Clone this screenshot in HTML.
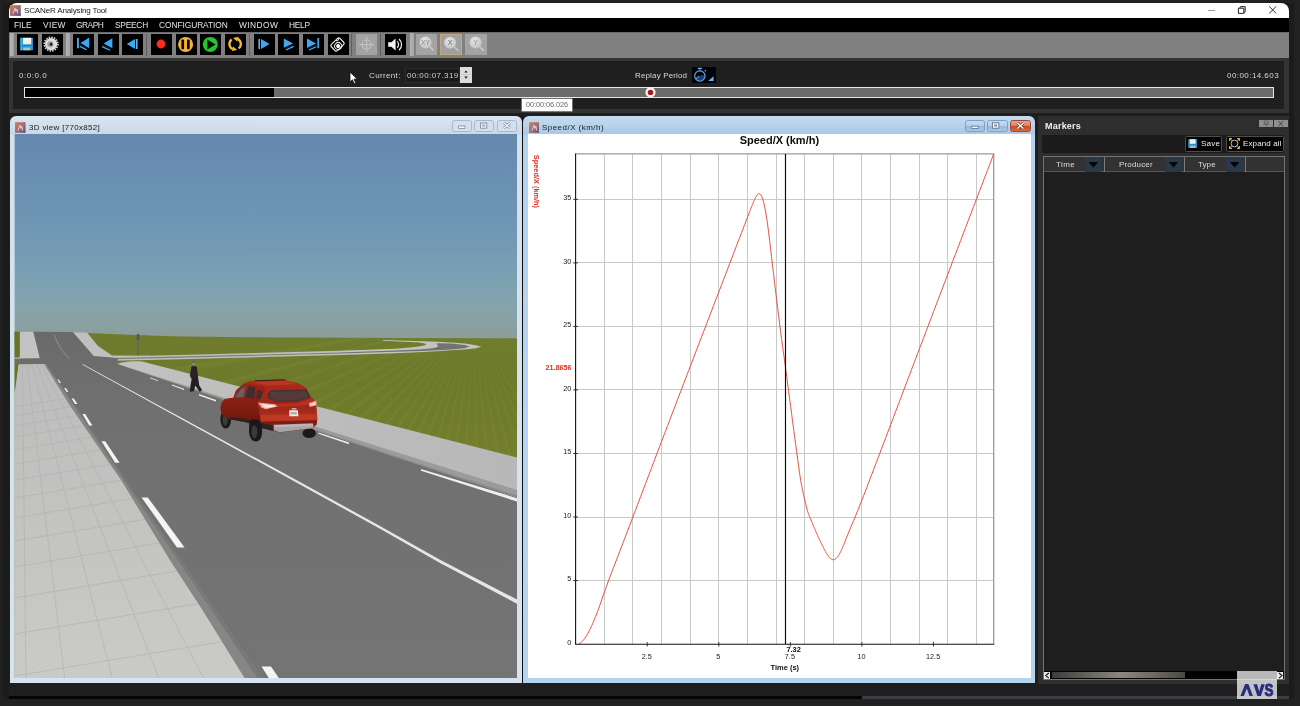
<!DOCTYPE html>
<html>
<head>
<meta charset="utf-8">
<title>SCANeR Analysing Tool</title>
<style>
html,body{margin:0;padding:0;}
body{width:1300px;height:706px;overflow:hidden;background:#212121;position:relative;font-family:"Liberation Sans",sans-serif;}
.a{position:absolute;}
.t{will-change:transform;position:absolute;white-space:nowrap;line-height:12px;font-family:"Liberation Sans",sans-serif;}
.tb{position:absolute;top:34.2px;width:21.2px;height:21px;background:#000;}
.tbd{position:absolute;top:34.2px;width:21.2px;height:21px;background:#a3a3a3;}
.sep{position:absolute;top:33.5px;width:1px;height:22.5px;background:#5e5e5e;}
.hd{position:absolute;top:32.8px;width:4.2px;height:23.5px;background:linear-gradient(90deg,#b4b4b4,#a4a4a4);}
svg{position:absolute;display:block;}
</style>
</head>
<body>
<!-- dark frame around the captured window -->
<div class="a" style="left:3px;top:3px;width:1291px;height:696px;background:#1a1c1b;"></div>
<!-- main window -->
<div class="a" style="left:9px;top:2.8px;width:1280px;height:693.2px;background:#1e1e1e;border-radius:8px 8px 0 0;overflow:hidden;">
  <div class="a" style="left:0;top:0;width:1280px;height:15.4px;background:#fff;"></div>
  <div class="a" style="left:0;top:15.4px;width:1280px;height:13.6px;background:#000;"></div>
  <div class="a" style="left:0;top:28.8px;width:1280px;height:26px;background:#808080;border-top:1px solid #6a6a6a;box-sizing:border-box;"></div>
  <!-- time panel -->
  <div class="a" style="left:0;top:54.8px;width:1280px;height:55.4px;background:#343434;"></div>
  <div class="a" style="left:4px;top:58.2px;width:1271px;height:48px;background:#1f1f1f;"></div>
</div>
<!-- bottom strip -->
<div class="a" style="left:9px;top:695.6px;width:853px;height:3.4px;background:#050505;"></div>
<div class="a" style="left:862px;top:695.6px;width:427px;height:3.4px;background:#3a3e45;"></div>

<!-- app icon -->
<svg style="left:10.3px;top:5px;" width="10.8" height="11" viewBox="0 0 11 11"><defs><linearGradient id="ai" x1="0" y1="0" x2="1" y2="1"><stop offset="0" stop-color="#d9824f"/><stop offset="0.55" stop-color="#9b6a7a"/><stop offset="1" stop-color="#5b4a7e"/></linearGradient></defs><rect width="11" height="11" fill="url(#ai)"/><path d="M3 8.5 L5.2 3.2 L6 6.5 L7.2 4 L8 8.5" stroke="#e8d6d6" stroke-width="0.9" fill="none"/></svg>
<!-- window controls -->
<div class="a" style="left:1208px;top:9.6px;width:7px;height:1.1px;background:#9a9a9a;"></div>
<svg style="left:1236px;top:4px;" width="12" height="12" viewBox="0 0 12 12"><path d="M2.4 4.2 h5.4 v5.2 h-5.4 z M3.8 4.2 L4.6 2.6 h4.6 v5.2 L7.8 8.6" fill="none" stroke="#222" stroke-width="1"/></svg>
<svg style="left:1267px;top:4px;" width="12" height="12" viewBox="0 0 12 12"><path d="M2.2 2.4 L9.2 9.4 M9.2 2.4 L2.2 9.4" stroke="#222" stroke-width="0.95" fill="none"/></svg>

<!-- toolbar -->
<div class="hd" style="left:10px;"></div>
<div class="tb" style="left:16.8px;"></div>
<div class="tb" style="left:41.5px;"></div>
<div class="hd" style="left:66px;"></div>
<div class="tb" style="left:72.7px;"></div>
<div class="tb" style="left:97.5px;"></div>
<div class="tb" style="left:122.2px;"></div>
<div class="sep" style="left:146.4px;"></div>
<div class="tb" style="left:151px;"></div>
<div class="tb" style="left:175.5px;"></div>
<div class="tb" style="left:200px;"></div>
<div class="tb" style="left:224.8px;"></div>
<div class="sep" style="left:249.2px;"></div>
<div class="tb" style="left:253.5px;"></div>
<div class="tb" style="left:278.2px;"></div>
<div class="tb" style="left:302.8px;"></div>
<div class="tb" style="left:327.5px;"></div>
<div class="sep" style="left:350.8px;width:1.6px;"></div>
<div class="tbd" style="left:356px;"></div>
<div class="sep" style="left:380.2px;"></div>
<div class="tb" style="left:384.8px;"></div>
<div class="hd" style="left:409.6px;"></div>
<div class="tbd" style="left:416.2px;"></div>
<div class="tbd" style="left:440.2px;width:21.6px;box-sizing:border-box;border:1.4px solid #c9a57e;background:#a0a0a0;"></div>
<div class="tbd" style="left:465.4px;"></div>
<svg style="left:0;top:30px;will-change:transform;" width="500" height="30" viewBox="0 30 500 30" font-family="Liberation Sans, sans-serif">
<defs>
<linearGradient id="lbl" x1="0" y1="0" x2="0" y2="1"><stop offset="0" stop-color="#f2fbff"/><stop offset="0.6" stop-color="#f6f3d8"/><stop offset="1" stop-color="#dfeef0"/></linearGradient>
<radialGradient id="mg" cx="0.4" cy="0.35" r="0.7"><stop offset="0" stop-color="#e6e6e6"/><stop offset="1" stop-color="#c2c2c2"/></radialGradient>
</defs>
<!-- save -->
<rect x="20.4" y="37.8" width="12.5" height="12.5" fill="#2a9fdb"/>
<rect x="20.4" y="37.8" width="1.6" height="12.5" fill="#3bb4ea"/>
<rect x="23" y="37.8" width="8.2" height="6.6" fill="url(#lbl)"/>
<rect x="23.2" y="47.6" width="7" height="2.7" fill="#b9bfc2"/>
<rect x="21.4" y="44.8" width="10.6" height="1.4" fill="#1e86c4"/>
<!-- gear -->
<circle cx="51.1" cy="44.1" r="6.7" fill="none" stroke="#d2d2d2" stroke-width="1.9" stroke-dasharray="1.5 1.13"/>
<circle cx="51.1" cy="44.1" r="6.1" fill="#dedede"/>
<circle cx="50.4" cy="44.3" r="3.2" fill="#a9a9a9"/>
<circle cx="49.4" cy="44.2" r="1.5" fill="#8d8d8d"/>
<ellipse cx="51.2" cy="44.3" rx="1.1" ry="1.7" fill="#141414"/>
<!-- skip to start -->
<rect x="77" y="38" width="1.9" height="10.2" fill="#46a9ee"/>
<path d="M80.6 43.1 L89.2 37.6 L89.2 48.2 Z" fill="#3fa8f2"/>
<path d="M79.8 46.4 L86.6 49.8" stroke="#58aeea" stroke-width="1.2"/>
<path d="M80.6 45 L87.4 48.6" stroke="#0c1c38" stroke-width="1"/>
<!-- play back -->
<path d="M103.6 43.4 L112.4 38.3 L112.4 48.3 Z" fill="#3fa8f2"/>
<path d="M102.2 46.6 L110 50.2" stroke="#58aeea" stroke-width="1.2"/>
<path d="M103 45.2 L110.8 49" stroke="#0c1c38" stroke-width="1"/>
<!-- step back -->
<path d="M126.8 44.1 L135 39 L135 49 Z" fill="#3fa8f2"/>
<rect x="136" y="39" width="1.6" height="10" fill="#5bb2f0"/>
<!-- record -->
<circle cx="161" cy="44" r="4.4" fill="#ff2d1c"/>
<!-- pause -->
<circle cx="185.6" cy="44.4" r="7.5" fill="#f5b335"/>
<rect x="181.4" y="39.6" width="2.7" height="9.6" rx="0.8" fill="#0a0500"/>
<rect x="187" y="39.6" width="2.7" height="9.6" rx="0.8" fill="#0a0500"/>
<!-- play -->
<circle cx="210.3" cy="44.4" r="7.5" fill="#24c52d"/>
<path d="M207.4 39.6 L215.6 44.5 L207.4 49.4 Z" fill="#031204"/>
<!-- loop -->
<g fill="none" stroke="#f3b934" stroke-width="2.3">
<path d="M231.64 39.48 A5.7 5.7 0 0 0 232.65 49.09"/>
<path d="M238.66 48.46 A5.7 5.7 0 0 0 237.65 38.85"/>
</g>
<path d="M233.05 46.4 L237.2 49.9 L231.9 51.1 Z M237.25 41.55 L233.1 38.05 L238.4 36.85 Z" fill="#f3b934"/>
<!-- step forward -->
<rect x="258.4" y="39" width="1.6" height="10" fill="#5bb2f0"/>
<path d="M261 39 L269.6 44 L261 49 Z" fill="#3fa8f2"/>
<!-- play forward -->
<path d="M283.8 38.4 L293 43.4 L283.8 47.8 Z" fill="#3fa8f2"/>
<path d="M286 50 L293.6 46.4" stroke="#58aeea" stroke-width="1.2"/>
<path d="M285.4 48.6 L293 45" stroke="#0c1c38" stroke-width="1"/>
<!-- skip to end -->
<path d="M307 38.4 L316 43.4 L307 48 Z" fill="#3fa8f2"/>
<rect x="317.4" y="38" width="1.7" height="10.2" fill="#46a9ee"/>
<path d="M309 50 L316.2 46.8" stroke="#58aeea" stroke-width="1.2"/>
<path d="M308.4 48.6 L315.8 45.2" stroke="#0c1c38" stroke-width="1"/>
<!-- camera -->
<g transform="translate(337.5 44.5) rotate(-43.7)" fill="none" stroke="#ececec" stroke-width="1.15">
<rect x="-6" y="-4.35" width="12" height="8.7" rx="1.7"/>
<path d="M1.6 -4.3 q0.6 1.8 2 1.6 q1.4 -0.2 1.6 -1.6" stroke-width="1"/>
<circle cx="-0.6" cy="1.6" r="3.5" stroke-width="1"/>
<circle cx="-0.6" cy="1.6" r="2.05" fill="#fff" stroke="none"/>
</g>
<!-- crosshair (disabled) -->
<g fill="none" stroke="#c3c3c3" stroke-width="1.1">
<circle cx="366.6" cy="44.6" r="4.6"/>
<path d="M366.6 37.2 V52 M359.2 44.6 H374"/>
</g>
<!-- sound -->
<path d="M388.2 42.2 H391.4 L395.6 38.4 V50.6 L391.4 46.8 H388.2 Z" fill="#f4f4f4"/>
<path d="M397.2 41.4 A4.4 4.4 0 0 1 397.2 47.8 M399 39 A7.4 7.4 0 0 1 399 50.2" fill="none" stroke="#f4f4f4" stroke-width="1.2"/>
<!-- magnifiers -->
<g>
<path d="M429.6 46.6 L433.8 50.6" stroke="#c8c8c8" stroke-width="1.5"/>
<circle cx="425.6" cy="42.4" r="6" fill="url(#mg)"/>
<text x="425.6" y="45" font-size="6.6" font-weight="700" text-anchor="middle" fill="#9a9a9a">XY</text>
<path d="M454.4 47 L458.6 51" stroke="#c8c8c8" stroke-width="1.5"/>
<circle cx="450.2" cy="42.8" r="6" fill="url(#mg)"/>
<text x="450.2" y="45.4" font-size="7" font-weight="700" text-anchor="middle" fill="#8d8d8d">X</text>
<path d="M479.6 46.6 L483.8 50.6" stroke="#c8c8c8" stroke-width="1.5"/>
<circle cx="475.6" cy="42.4" r="6" fill="url(#mg)"/>
<text x="475.6" y="45" font-size="7" font-weight="700" text-anchor="middle" fill="#a9a9a9">Y</text>
</g>
</svg>


<!-- time panel widgets -->
<div class="a" style="left:24px;top:87px;width:1250px;height:11px;box-sizing:border-box;border:1px solid #e6e6e6;background:#6b6b6b;"></div>
<div class="a" style="left:25px;top:88px;width:249px;height:9px;background:#000;"></div>
<!-- marker on the bar -->
<svg style="left:644px;top:86px;" width="13" height="13" viewBox="0 0 13 13"><circle cx="6.5" cy="6.4" r="5.1" fill="#f4f4f4"/><circle cx="6.5" cy="6.4" r="2.7" fill="#b0160f"/></svg>
<!-- tooltip -->
<div class="a" style="left:521.8px;top:98.8px;width:50.4px;height:12px;background:#fdfdfd;box-shadow:0 0 0 0.5px #c8c8c8;"></div>
<!-- spinner -->
<div class="a" style="left:405px;top:67.6px;width:55px;height:15px;background:#1a1a1a;border:1px solid #2c2c2c;box-sizing:border-box;"></div>
<div class="a" style="left:460px;top:67.4px;width:12px;height:15.2px;background:#dcdcdc;"></div>
<svg style="left:460px;top:67.4px;" width="12" height="15.2" viewBox="0 0 12 15.2"><path d="M4.2 5.6 L6 3.4 L7.8 5.6 Z M4.2 9.6 L6 11.8 L7.8 9.6 Z" fill="#222"/><path d="M1 7.6 H11" stroke="#bdbdbd" stroke-width="0.6"/></svg>
<!-- replay icon -->
<div class="a" style="left:692px;top:67.1px;width:23.9px;height:15.6px;background:#02030a;"></div>
<svg style="left:688px;top:64px;" width="32" height="22" viewBox="688 64 32 22"><path d="M695.4 77.2 C697 76.2 699 75.6 701 75.4 L704.6 75 A5.4 5.4 0 0 1 696.6 80.6 Z" fill="#14417c"/><circle cx="699.84" cy="76" r="5.2" fill="none" stroke="#6aa9de" stroke-width="1.15"/><path d="M697.7 68.4 H702 M699.84 68.4 V70.6" stroke="#6aa9de" stroke-width="1.1" fill="none"/><path d="M696.4 78.8 L698.9 76.2" stroke="#7fb6e4" stroke-width="0.9"/><circle cx="705.3" cy="70.7" r="0.8" fill="#8fc0e6"/><path d="M713.6 76.3 V81.1 H708.2 Z" fill="#6db2ea"/></svg>
<!-- mouse cursor -->
<svg style="left:348.6px;top:70.6px;" width="10" height="14" viewBox="0 0 10 14"><path d="M1 1 L1 11 L3.4 8.8 L5.2 12.6 L6.8 11.9 L5 8.2 L8.2 8 Z" fill="#fff" stroke="#111" stroke-width="0.8"/></svg>

<!-- MDI area: sub-window frames -->
<div class="a" style="left:9.5px;top:116px;width:512.5px;height:567px;border-radius:6px 6px 0 0;background:linear-gradient(180deg,#dbe6f1 0,#c9d7e7 18px,#d3e0ee 19px,#d6e3f0 100%);"></div>
<div class="a" style="left:522px;top:116px;width:1.4px;height:567px;background:#0d0d0d;"></div>
<div class="a" style="left:523.2px;top:116px;width:512px;height:567px;border-radius:6px 6px 0 0;background:linear-gradient(180deg,#c6dcf0 0,#a9c9e8 18px,#b6d3ee 19px,#b3d4f0 100%);"></div>
<div class="a" style="left:528px;top:134px;width:502.6px;height:543.6px;background:#fff;"></div>
<!-- sub-window icons -->
<svg style="left:15px;top:122px;" width="10.6" height="11" viewBox="0 0 11 11"><rect width="11" height="11" fill="url(#ai)"/><path d="M3 8.8 L5.2 3 L6 6.5 L7.2 4 L8 8.8" stroke="#ecdada" stroke-width="0.9" fill="none"/></svg>
<svg style="left:528.6px;top:122px;" width="10.6" height="11" viewBox="0 0 11 11"><rect width="11" height="11" fill="url(#ai)"/><path d="M3 8.8 L5.2 3 L6 6.5 L7.2 4 L8 8.8" stroke="#ecdada" stroke-width="0.9" fill="none"/></svg>
<!-- 3D window buttons (inactive) -->
<div class="a" style="left:451.6px;top:119.6px;width:20px;height:12px;box-sizing:border-box;border:1px solid #a9b8ca;border-radius:2.5px;background:#d5e0ed;"></div>
<div class="a" style="left:474.2px;top:119.6px;width:20px;height:12px;box-sizing:border-box;border:1px solid #a9b8ca;border-radius:2.5px;background:#d5e0ed;"></div>
<div class="a" style="left:496.8px;top:119.6px;width:20.2px;height:12px;box-sizing:border-box;border:1px solid #a9b8ca;border-radius:2.5px;background:#d5e0ed;"></div>
<svg style="left:451.6px;top:119.6px;" width="66" height="12" viewBox="0 0 66 12"><rect x="6.6" y="6" width="6.4" height="2.4" fill="#f4f7fb" stroke="#7d8b9d" stroke-width="0.8"/><rect x="28.6" y="3" width="6.2" height="5.2" fill="#f4f7fb" stroke="#7d8b9d" stroke-width="0.9"/><rect x="30.2" y="4.6" width="3" height="2" fill="#9aa8ba"/><path d="M52 3 L58 8 M58 3 L52 8" stroke="#7d8b9d" stroke-width="2.6"/><path d="M52 3 L58 8 M58 3 L52 8" stroke="#f4f7fb" stroke-width="1.2"/></svg>
<!-- chart window buttons (active) -->
<div class="a" style="left:964.6px;top:119.6px;width:20.4px;height:12px;box-sizing:border-box;border:1px solid #7f9fc4;border-radius:2.5px;background:linear-gradient(180deg,#c7dbef 0,#b6cfe9 48%,#96b7dc 52%,#a9c8e8 100%);"></div>
<div class="a" style="left:987.4px;top:119.6px;width:20.2px;height:12px;box-sizing:border-box;border:1px solid #7f9fc4;border-radius:2.5px;background:linear-gradient(180deg,#c7dbef 0,#b6cfe9 48%,#96b7dc 52%,#a9c8e8 100%);"></div>
<div class="a" style="left:1010px;top:119.6px;width:20.6px;height:12px;box-sizing:border-box;border:1px solid #9a4a36;border-radius:2.5px;background:linear-gradient(180deg,#e8a58f 0,#dc7d62 48%,#c8492a 52%,#d96a3a 100%);"></div>
<svg style="left:964.6px;top:119.6px;" width="66" height="12" viewBox="0 0 66 12"><rect x="6.8" y="6.2" width="6.4" height="2.2" fill="#fff" stroke="#5f6f86" stroke-width="0.8"/><rect x="27.4" y="2.8" width="6.4" height="5.4" fill="#fff" stroke="#5f6f86" stroke-width="0.9"/><rect x="29.2" y="4.4" width="2.8" height="2.2" fill="#7e8ea6"/><path d="M52.4 3 L58.4 8.4 M58.4 3 L52.4 8.4" stroke="#7a3422" stroke-width="2.8"/><path d="M52.4 3 L58.4 8.4 M58.4 3 L52.4 8.4" stroke="#fff" stroke-width="1.4"/></svg>
<!-- 3D view content -->
<svg style="left:14px;top:134px;" width="503" height="546" viewBox="14 134 503 546" preserveAspectRatio="none">
<defs>
<linearGradient id="sky" x1="0" y1="134" x2="0" y2="340" gradientUnits="userSpaceOnUse">
<stop offset="0" stop-color="#6589ae"/><stop offset="0.25" stop-color="#6a90b2"/><stop offset="0.5" stop-color="#7198b5"/><stop offset="0.7" stop-color="#7ba1b3"/><stop offset="0.82" stop-color="#83a4ac"/><stop offset="0.92" stop-color="#8aa1a3"/><stop offset="1" stop-color="#8c9c9b"/>
</linearGradient>
<linearGradient id="grass" x1="0" y1="332" x2="0" y2="500" gradientUnits="userSpaceOnUse">
<stop offset="0" stop-color="#6f7c2e"/><stop offset="0.3" stop-color="#6d7a2a"/><stop offset="1" stop-color="#77822c"/>
</linearGradient>
<linearGradient id="road" x1="0" y1="332" x2="0" y2="678" gradientUnits="userSpaceOnUse">
<stop offset="0" stop-color="#6a6a6a"/><stop offset="0.2" stop-color="#707070"/><stop offset="1" stop-color="#747474"/>
</linearGradient>
<linearGradient id="walk" x1="0" y1="360" x2="0" y2="678" gradientUnits="userSpaceOnUse">
<stop offset="0" stop-color="#bcbcbc"/><stop offset="0.5" stop-color="#c3c3c2"/><stop offset="1" stop-color="#cacac8"/>
</linearGradient>
<pattern id="gpat" width="8" height="2.4" patternUnits="userSpaceOnUse"><rect width="8" height="1" fill="#5f6c22" opacity="0.5"/></pattern>
<clipPath id="gc"><path d="M14.4 331.8 L73 332.2 L88 333.1 C120 334.6 150 335.7 175 336.3 C210 337 245 337.3 300 337.6 L400 338 L517 338.2 L517 681 L14.4 681 Z"/></clipPath>
<clipPath id="sc"><rect x="14.4" y="134" width="502.6" height="546"/></clipPath>
<linearGradient id="walkr" x1="117" y1="0" x2="517" y2="0" gradientUnits="userSpaceOnUse"><stop offset="0" stop-color="#c2c2c0"/><stop offset="0.5" stop-color="#bcbcbc"/><stop offset="1" stop-color="#b8b8b8"/></linearGradient>
</defs>
<g clip-path="url(#sc)">
<rect x="14.4" y="134" width="502.6" height="210" fill="url(#sky)"/>
<!-- grass -->
<path d="M14.4 331.8 L73 332.2 L88 333.1 C120 334.6 150 335.7 175 336.3 C210 337 245 337.3 300 337.6 L400 338 L517 338.2 L517 681 L14.4 681 Z" fill="url(#grass)"/>
<path d="M474 318 L-217 433 L-214 446 Z M474 318 L-205 487 L-202 500 Z M474 318 L-190 540 L-186 552 Z M474 318 L-171 591 L-165 603 Z M474 318 L-147 641 L-141 653 Z M474 318 L-120 688 L-113 700 Z M474 318 L-89 734 L-81 745 Z M474 318 L-55 777 L-46 787 Z M474 318 L-17 817 L-7 826 Z M474 318 L24 854 L34 862 Z M474 318 L67 888 L78 895 Z M474 318 L113 918 L125 925 Z M474 318 L161 944 L173 950 Z M474 318 L211 967 L224 972 Z M474 318 L263 985 L276 989 Z M474 318 L316 1000 L329 1003 Z M474 318 L370 1010 L383 1012 Z M474 318 L425 1016 L438 1017 Z M474 318 L479 1018 L493 1018 Z M474 318 L534 1015 L548 1014 Z M474 318 L589 1009 L602 1006 Z M474 318 L643 997 L656 994 Z M474 318 L696 982 L708 978 Z M474 318 L747 963 L759 957 Z M474 318 L797 939 L809 933 Z M474 318 L844 912 L856 905 Z M474 318 L890 881 L901 873 Z M474 318 L933 847 L943 838 Z M474 318 L973 809 L982 799 Z M474 318 L1010 768 L1018 758 Z M474 318 L1044 725 L1051 714 Z M474 318 L1074 679 L1081 667 Z M474 318 L1100 631 L1106 619 Z M474 318 L1123 581 L1128 568 Z M474 318 L1141 529 L1145 516 Z M474 318 L1156 476 L1159 463 Z" fill="#8d9840" opacity="0.17" clip-path="url(#gc)"/>
<path d="M230 372 L517 348 L517 470 L400 436 Z" fill="url(#gpat)" opacity="0.1"/>
<!-- upper-left sidewalk -->
<path d="M19.6 331.8 L33.4 331.8 L40 358.4 L19.2 358.8 L14.4 358.9 L14.4 357.4 L19.6 357.2 Z" fill="#c3c3c3"/>
<!-- upper-right sidewalk strip -->
<path d="M72.6 332.2 L87 332.6 L98 346 L112 355.6 L150 355.8 L150 358 L93 358 Z" fill="#c0c0c0"/>
<!-- side road (S curve) -->
<path d="M98 358.8 L113 358.6 L180 357.1 L341 352.9" fill="none" stroke="#bfbfb9" stroke-width="4.3"/>
<path d="M98 358.9 L113 358.7 L180 357.2 L341 353" fill="none" stroke="#7d7d80" stroke-width="1.2"/>
<path d="M340 350.75 L395 348.7 L410 347.4 L420 346.2 C424 345.6 427 344.8 426 344 C425 343.2 420 342.6 415 342.2 L383 340.8 L383 340.1 L415 341 L437 341.8 L451 342.4 L465 343.6 L476 345.2 L481.4 346.8 L476 348.2 L465 349.4 L451 350.2 L437 351.2 L423 352 L395 353.2 L340 355.05 Z" fill="#c4c4bd"/>
<path d="M340 352.4 L395 350.5 L423 349.2 L432 348.2 C437 347.4 439 346.4 438 345.4 C437 344.4 436 343.8 437 343.2 L451 343.6 L464.6 345 L469.5 346.6 L464.6 348.3 L451 349.4 L437 350.2 L423 351 L395 351.8 L340 353.6 Z" fill="#717178"/>
<!-- right sidewalk (near) -->
<path d="M117 364 C124 361.4 132 360.6 142 361.6 L517 457.6 L517 497.4 Z" fill="url(#walkr)"/>
<!-- main road -->
<path d="M33.4 331.8 L72.8 332 L93.8 356 L118 358 L117 364 L517 497.4 L517 681 L264.4 681 L46 364 L14.4 364.4 L14.4 358.8 L40 358.2 Z" fill="url(#road)"/>
<!-- curb right -->
<path d="M117 364 L517 497.6 L517 490 L400 453.2 L119 364.4 Z" fill="#9b9b9b"/>
<path d="M160 378.4 L517 497.6 L517 495.6 L400 457.4 Z" fill="#8a8a8a"/>
<!-- left sidewalk (near) -->
<path d="M44.2 364 L46 364 L264.4 681 L246.4 681 L202.5 610 L169.9 560 L121.1 480 L69.5 405 Z" fill="#868686"/>
<path d="M45.6 364 L46 364 L264.4 681 L259.4 681 Z" fill="#787878"/>
<path d="M18.4 364.2 L44.2 364 L69.5 405 L121.1 480 L169.9 560 L202.5 610 L246.4 681 L14.4 681 L14.4 394 Z" fill="url(#walk)"/>
<!-- left sidewalk tile lines -->
<g stroke="#adadaa" stroke-width="0.7" fill="none" opacity="0.8">
<path d="M22.4 365 L26 681 M27 365 L65 681 M32 365 L113 681 M37 365 L160 681 M41.4 365 L205 681"/>
<path d="M14.4 676 L222.9 641.6 M14.4 634 L198.4 603.6 M14.4 598 L177.2 571.1 M14.4 567 L159.6 543.0 M14.4 541 L145.2 519.4 M14.4 518 L132.4 498.5 M14.4 498 L121.3 480.4 M14.4 480 L110.2 464.2 M14.4 464 L100.3 449.8 M14.4 450 L91.7 437.2 M14.4 437 L83.7 425.6 M14.4 426 L76.9 415.7 M14.4 416 L70.7 406.7 M14.4 407 L65.5 398.6"/>
</g>
<!-- faint centre arc at top of road -->
<path d="M54 335 C58 344 62 352 69 358" fill="none" stroke="#9a9a9a" stroke-width="0.8"/>
<!-- solid white centre line -->
<path d="M82.5 364.0 L300 482.0 L380 526.0 L440 559.7 L517 599.5 L517 603.8 L440 562.9 L380 528.8 L300 484.4 L82.5 364.8 Z" fill="#e6e6e6"/>
<!-- left dashed line -->
<g fill="#f4f4f4">
<path d="M57.4 379.6 L58.6 379.6 L61 383 L59.6 383 Z"/>
<path d="M64.2 388 L65.8 388 L68.4 392 L66.6 392 Z"/>
<path d="M71.6 398.4 L73.8 398.4 L77.4 404 L75 404 Z"/>
<path d="M82.4 414 L85.2 414 L92.4 425.6 L89.2 425.6 Z"/>
<path d="M101.4 441.2 L105.2 441.2 L119.6 462.8 L115.2 462.8 Z"/>
<path d="M141.6 497.4 L147.8 497.4 L184.6 547.4 L177 547.4 Z"/>
<path d="M261.6 666.4 L271 666.4 L280.8 681 L270.6 681 Z"/>
</g>
<!-- right dashed line -->
<g fill="#efefef">
<path d="M150 377.4 L158 380.2 L158 381 L150 378.2 Z"/>
<path d="M172 384.6 L184 388.8 L184 390 L172 385.6 Z"/>
<path d="M199 394 L216 400 L216 401.6 L199 395.4 Z"/>
<path d="M318.5 432.4 L349 442.6 L349 444.2 L318.5 433.8 Z"/>
<path d="M421 469.1 L517 498.2 L517 501.6 L421 470.8 Z"/>
</g>
<!-- green strip far left -->
<path d="M14.4 331.8 L19.6 331.8 L19.6 357.2 L14.4 357.4 Z" fill="#66752a"/>
<path d="M14.4 364.4 L18.4 364.2 L14.4 394 Z" fill="#66752a"/>
<!-- sign post -->
<path d="M138 340 V355.6" stroke="#5a5a5a" stroke-width="0.8"/>
<rect x="136.8" y="334" width="2.6" height="6.2" rx="1" fill="#4e5560"/>
<!-- pedestrian + car drawn in 7.0625x zoom coords of region (180,350) -->
<g transform="translate(180 350) scale(0.14159)">
<!-- pedestrian -->
<ellipse cx="98" cy="92" rx="12" ry="14" fill="#a9876e"/>
<path d="M86 84 Q98 72 110 84 L108 92 L88 92 Z" fill="#6b5a4c"/>
<path d="M80 118 Q98 106 120 120 L128 196 L84 208 L70 184 Z" fill="#2a2222"/>
<path d="M84 200 L128 194 L136 250 L156 282 L140 296 L108 250 L98 292 L70 294 L74 250 Z" fill="#231e1f"/>
<path d="M70 184 L64 186 L70 176 Z" fill="#a9876e"/>
<!-- car -->
</g>
<g transform="translate(215 372) scale(0.107632)">
<defs>
<linearGradient id="cb" x1="0" y1="0" x2="0" y2="1"><stop offset="0" stop-color="#ab2b1c"/><stop offset="0.5" stop-color="#9e2518"/><stop offset="0.78" stop-color="#b53321"/><stop offset="1" stop-color="#85190f"/></linearGradient>
<linearGradient id="cs" x1="0" y1="0" x2="0" y2="1"><stop offset="0" stop-color="#98241a"/><stop offset="0.6" stop-color="#801c12"/><stop offset="1" stop-color="#5f130c"/></linearGradient>
</defs>
<!-- far wheels -->
<ellipse cx="100" cy="440" rx="50" ry="86" fill="#1e1a1b"/>
<ellipse cx="94" cy="446" rx="24" ry="52" fill="#3b3a3c"/>
<ellipse cx="875" cy="568" rx="62" ry="46" fill="#1c191a"/>
<!-- body: rear face + roof -->
<path d="M270 105 Q300 90 330 85 L640 75 Q720 88 780 110 L850 150 L890 230 L940 280 L952 440 L942 490 L912 522 L600 562 L540 546 L430 520 L400 300 L440 150 Z" fill="url(#cb)"/>
<!-- body: side -->
<path d="M50 330 L60 290 L90 252 L170 236 L195 170 L270 105 L440 130 L470 160 L402 290 L426 470 L434 522 L310 472 L140 440 L62 400 Z" fill="url(#cs)"/>
<!-- roof -->
<path d="M270 105 Q300 90 330 85 L640 75 Q720 88 780 110 L850 150 L520 168 L470 160 L440 130 Z" fill="#a8291b"/>
<path d="M330 92 L640 82 Q700 92 760 112 L500 128 Z" fill="#c03a27" opacity="0.8"/>
<path d="M370 82 L650 72" stroke="#2b1d1b" stroke-width="9" fill="none"/>
<!-- windows -->
<path d="M182 238 L188 214 L255 136 L292 130 L270 236 Z" fill="#5a4a49"/>
<path d="M196 236 L240 160 L275 150 L262 232 Z" fill="#7b6e6c" opacity="0.6"/>
<path d="M285 238 L310 134 L372 140 L365 246 Z" fill="#3c2f30"/>
<path d="M385 246 L396 164 L442 186 L426 252 Z" fill="#3c2f30"/>
<path d="M490 200 L520 170 L850 160 L886 236 L760 276 L570 282 L490 242 Z" fill="#4a3233"/>
<path d="M520 186 L840 176 L868 232 L760 262 L575 266 L512 236 Z" fill="#553a3a"/>
<!-- crease under window + highlight band -->
<path d="M400 290 L560 300 L760 290 L890 250 L940 280 L942 300 L760 318 L560 326 L402 312 Z" fill="#b8301f"/>
<path d="M420 400 L946 392 L950 440 L430 452 Z" fill="#c23a26" opacity="0.85"/>
<path d="M412 462 L948 448 L942 490 L430 500 Z" fill="#7e1b12"/>
<!-- tail lights -->
<path d="M400 284 L560 300 L582 320 L470 346 L430 330 Z" fill="#e9a79b"/>
<path d="M430 298 L548 308 L560 320 L474 336 L446 324 Z" fill="#fbe6e0"/>
<path d="M870 290 L940 264 L946 310 L880 326 Z" fill="#e9a79b"/>
<path d="M884 296 L934 280 L938 304 L890 314 Z" fill="#f8d8d0"/>
<!-- plate -->
<path d="M690 355 L770 355 L775 410 L690 412 Z" fill="#ece6e6"/>
<rect x="702" y="372" width="58" height="22" fill="#b9a8ac"/>
<ellipse cx="734" cy="342" rx="26" ry="8" fill="#c9b0ae"/>
<!-- lower trim + bumper -->
<path d="M140 440 L310 472 L430 520 L545 548 L545 500 L400 468 L300 440 L150 420 Z" fill="#2b2223"/>
<path d="M545 490 L910 475 L916 520 L600 560 L545 542 Z" fill="#a6a6a8"/>
<path d="M548 498 L910 482 L912 498 L548 514 Z" fill="#bcbcbe"/>
<!-- near rear wheel -->
<path d="M318 470 Q330 440 375 440 Q430 446 438 520 L436 580 Q424 646 375 646 Q326 640 316 560 Z" fill="#1b1819"/>
<ellipse cx="366" cy="556" rx="28" ry="62" fill="#39383a"/>
<!-- mirror -->
<path d="M115 212 L165 205 L166 240 L120 242 Z" fill="#d9b1a6"/>
</g>

</g>
</svg>
<!-- bottom frame strip --><div class="a" style="left:9.5px;top:677.7px;width:512.5px;height:5.3px;background:#d6e3f0;"></div>
<!-- chart content -->
<svg style="left:528px;top:134px;will-change:transform;" width="502.6" height="543.6" viewBox="528 134 502.6 543.6" font-family="Liberation Sans, sans-serif">
<path d="M604.5 153.9 V644.1 M632.5 153.9 V644.1 M661.5 153.9 V644.1 M690.5 153.9 V644.1 M718.5 153.9 V644.1 M747.5 153.9 V644.1 M776.5 153.9 V644.1 M804.5 153.9 V644.1 M833.5 153.9 V644.1 M861.5 153.9 V644.1 M890.5 153.9 V644.1 M919.5 153.9 V644.1 M947.5 153.9 V644.1 M976.5 153.9 V644.1 M575.6 580.5 H993.7 M575.6 517.5 H993.7 M575.6 453.5 H993.7 M575.6 389.5 H993.7 M575.6 326.5 H993.7 M575.6 262.5 H993.7 M575.6 199.5 H993.7" stroke="#c9c9c9" stroke-width="1" fill="none"/>
<path d="M575.6 153.9 H993.7 V644.1" stroke="#9c9c9c" stroke-width="1.3" fill="none"/>
<path d="M578.7 644.0 L579.7 643.4 L580.7 642.7 L581.7 641.9 L582.7 640.9 L583.7 639.7 L584.7 638.4 L585.7 637.0 L586.7 635.4 L587.7 633.7 L588.7 631.8 L589.7 629.8 L590.7 627.8 L591.7 625.7 L592.7 623.5 L593.7 621.2 L594.7 618.8 L595.7 616.4 L596.7 613.9 L597.7 611.3 L598.7 608.5 L599.7 605.6 L600.7 602.8 L601.7 599.9 L602.7 597.0 L603.7 594.2 L604.7 591.3 L605.7 588.5 L606.7 585.7 L607.7 582.9 L608.7 580.2 L609.7 577.5 L610.7 574.9 L611.7 572.3 L612.7 569.7 L613.7 567.1 L614.7 564.6 L615.7 562.0 L616.7 559.4 L617.7 556.8 L618.7 554.2 L619.7 551.5 L620.7 548.9 L621.7 546.3 L622.7 543.7 L623.7 541.1 L624.7 538.4 L625.7 535.8 L626.7 533.2 L627.7 530.6 L628.7 528.0 L629.7 525.3 L630.7 522.7 L631.7 520.1 L632.7 517.4 L633.7 514.8 L634.7 512.2 L635.7 509.6 L636.7 506.9 L637.7 504.3 L638.7 501.7 L639.7 499.0 L640.7 496.4 L641.7 493.8 L642.7 491.2 L643.7 488.5 L644.7 485.9 L645.7 483.3 L646.7 480.6 L647.7 478.0 L648.7 475.4 L649.7 472.7 L650.7 470.1 L651.7 467.5 L652.7 464.8 L653.7 462.2 L654.7 459.6 L655.7 457.0 L656.7 454.3 L657.7 451.7 L658.7 449.1 L659.7 446.4 L660.7 443.8 L661.7 441.2 L662.7 438.6 L663.7 435.9 L664.7 433.3 L665.7 430.7 L666.7 428.0 L667.7 425.4 L668.7 422.8 L669.7 420.2 L670.7 417.5 L671.7 414.9 L672.7 412.3 L673.7 409.7 L674.7 407.1 L675.7 404.4 L676.7 401.8 L677.7 399.2 L678.7 396.6 L679.7 394.0 L680.7 391.4 L681.7 388.8 L682.7 386.1 L683.7 383.5 L684.7 380.9 L685.7 378.3 L686.7 375.7 L687.7 373.1 L688.7 370.5 L689.7 367.9 L690.7 365.3 L691.7 362.7 L692.7 360.0 L693.7 357.4 L694.7 354.8 L695.7 352.2 L696.7 349.6 L697.7 347.0 L698.7 344.4 L699.7 341.8 L700.7 339.2 L701.7 336.6 L702.7 334.0 L703.7 331.4 L704.7 328.8 L705.7 326.2 L706.7 323.6 L707.7 321.0 L708.7 318.4 L709.7 315.8 L710.7 313.1 L711.7 310.5 L712.7 307.9 L713.7 305.3 L714.7 302.7 L715.7 300.1 L716.7 297.5 L717.7 294.9 L718.7 292.3 L719.7 289.7 L720.7 287.1 L721.7 284.5 L722.7 281.9 L723.7 279.3 L724.7 276.7 L725.7 274.1 L726.7 271.4 L727.7 268.8 L728.7 266.2 L729.7 263.6 L730.7 261.0 L731.7 258.4 L732.7 255.8 L733.7 253.1 L734.7 250.5 L735.7 247.9 L736.7 245.3 L737.7 242.7 L738.7 240.1 L739.7 237.5 L740.7 234.9 L741.7 232.3 L742.7 229.7 L743.7 227.1 L744.7 224.5 L745.7 221.9 L746.7 219.3 L747.7 216.7 L748.7 214.1 L749.7 211.5 L750.0 210.7 L750.5 209.4 L750.7 208.9 L751.0 208.1 L751.5 206.9 L751.7 206.4 L752.0 205.6 L752.5 204.4 L752.7 203.9 L753.0 203.2 L753.5 202.0 L753.7 201.5 L754.0 200.8 L754.5 199.7 L754.7 199.2 L755.0 198.6 L755.5 197.6 L755.7 197.2 L756.0 196.7 L756.5 195.8 L756.7 195.5 L757.0 195.1 L757.5 194.5 L757.7 194.3 L758.0 194.0 L758.5 193.7 L758.7 193.7 L759.0 193.7 L759.5 193.9 L759.7 194.0 L760.0 194.2 L760.5 194.5 L760.7 194.8 L761.0 195.2 L761.5 196.0 L761.7 196.4 L762.0 197.0 L762.5 198.4 L762.7 199.0 L763.0 200.0 L763.5 201.8 L763.7 202.5 L764.0 203.8 L764.5 206.0 L764.7 206.9 L765.0 208.4 L765.5 211.1 L765.7 212.2 L766.0 214.0 L766.5 217.1 L766.7 218.4 L767.0 220.4 L767.5 223.9 L767.7 225.4 L768.0 227.6 L768.5 231.3 L768.7 232.8 L769.0 235.1 L769.5 239.2 L769.7 240.8 L770.0 243.4 L770.5 247.8 L770.7 249.6 L771.0 252.2 L771.5 256.6 L771.7 258.3 L772.0 260.8 L772.5 265.1 L772.7 266.7 L773.0 269.3 L773.5 273.5 L773.7 275.2 L774.0 277.7 L774.5 281.9 L774.7 283.6 L775.0 286.1 L775.5 290.2 L775.7 291.9 L776.0 294.4 L776.5 298.5 L776.7 300.1 L777.0 302.6 L777.5 306.7 L777.7 308.3 L778.0 310.8 L778.5 314.9 L778.7 316.5 L779.0 318.9 L779.5 322.9 L779.7 324.5 L780.0 326.8 L780.5 330.7 L780.7 332.3 L781.0 334.5 L781.5 338.3 L781.7 339.8 L782.0 342.0 L782.5 345.6 L782.7 347.1 L783.0 349.3 L783.5 352.9 L783.7 354.3 L784.0 356.5 L784.5 360.1 L784.7 361.6 L785.0 363.8 L785.5 367.5 L785.7 369.0 L786.0 371.2 L786.5 375.0 L786.7 376.5 L787.0 378.7 L787.5 382.5 L787.7 384.0 L788.0 386.3 L788.5 390.1 L788.7 391.6 L789.0 393.9 L789.5 397.7 L789.7 399.2 L790.0 401.5 L790.5 405.2 L790.7 406.7 L791.0 409.0 L791.5 412.8 L791.7 414.3 L792.0 416.6 L792.5 420.4 L792.7 422.0 L793.0 424.2 L793.5 428.1 L793.7 429.6 L794.0 431.8 L794.5 435.6 L794.7 437.1 L795.0 439.4 L795.5 443.1 L795.7 444.5 L796.0 446.7 L796.5 450.4 L796.7 451.9 L797.0 454.2 L797.5 458.0 L797.7 459.5 L798.0 461.7 L798.5 465.4 L798.7 466.9 L799.0 469.0 L799.5 472.6 L799.7 473.9 L800.0 475.9 L800.5 479.1 L800.7 480.3 L801.0 482.0 L801.5 484.7 L801.7 485.8 L802.0 487.3 L802.5 489.8 L802.7 490.8 L803.0 492.2 L803.5 494.5 L803.7 495.4 L804.0 496.7 L804.5 498.9 L804.7 499.7 L805.0 501.0 L805.5 503.1 L805.7 503.9 L806.0 505.2 L806.5 507.2 L806.7 508.0 L807.0 509.1 L807.5 510.9 L807.7 511.6 L808.0 512.5 L808.5 513.9 L808.7 514.5 L809.0 515.2 L809.5 516.5 L809.7 516.9 L810.0 517.6 L810.5 518.8 L810.7 519.3 L811.0 520.0 L811.5 521.2 L811.7 521.7 L812.0 522.4 L812.5 523.7 L812.7 524.1 L813.0 524.9 L813.5 526.1 L813.7 526.5 L814.0 527.3 L814.5 528.4 L814.7 528.9 L815.0 529.6 L815.5 530.8 L815.7 531.3 L816.0 531.9 L816.5 533.1 L816.7 533.5 L817.0 534.2 L817.5 535.3 L817.7 535.8 L818.0 536.4 L818.5 537.5 L818.7 537.9 L819.0 538.6 L819.5 539.7 L819.7 540.1 L820.0 540.7 L820.5 541.8 L820.7 542.2 L821.0 542.8 L821.5 543.8 L821.7 544.2 L822.0 544.8 L822.5 545.8 L822.7 546.2 L823.0 546.8 L823.5 547.7 L823.7 548.1 L824.0 548.7 L824.5 549.7 L824.7 550.0 L825.0 550.6 L825.5 551.5 L825.7 551.8 L826.0 552.4 L826.5 553.2 L826.7 553.5 L827.0 554.0 L827.5 554.8 L827.7 555.1 L828.0 555.6 L828.5 556.3 L828.7 556.6 L829.0 557.0 L829.5 557.6 L829.7 557.8 L830.0 558.1 L830.5 558.5 L830.7 558.6 L831.0 558.8 L831.5 559.1 L831.7 559.2 L832.0 559.4 L832.5 559.6 L832.7 559.6 L833.0 559.7 L833.5 559.7 L833.7 559.7 L834.0 559.6 L834.5 559.4 L834.7 559.4 L835.0 559.2 L835.5 558.9 L835.7 558.7 L836.0 558.5 L836.5 558.0 L836.7 557.8 L837.0 557.5 L837.5 556.9 L837.7 556.7 L838.0 556.3 L838.5 555.5 L838.7 555.2 L839.0 554.7 L839.5 553.9 L839.7 553.5 L840.0 552.9 L840.5 552.0 L840.7 551.6 L841.0 551.0 L841.5 549.9 L841.7 549.5 L842.0 548.8 L842.5 547.7 L842.7 547.2 L843.0 546.5 L843.5 545.3 L843.7 544.8 L844.0 544.1 L844.5 542.9 L844.7 542.4 L845.7 539.8 L846.7 537.2 L847.7 534.7 L848.7 532.2 L849.7 529.8 L850.7 527.4 L851.7 525.1 L852.7 522.8 L853.7 520.5 L854.7 518.1 L855.7 515.6 L856.7 513.2 L857.7 510.7 L858.7 508.2 L859.7 505.7 L860.7 503.2 L861.7 500.6 L862.7 498.1 L863.7 495.5 L864.7 492.9 L865.7 490.3 L866.7 487.7 L867.7 485.1 L868.7 482.5 L869.7 479.9 L870.7 477.2 L871.7 474.6 L872.7 472.0 L873.7 469.3 L874.7 466.7 L875.7 464.1 L876.7 461.5 L877.7 458.8 L878.7 456.2 L879.7 453.6 L880.7 451.0 L881.7 448.4 L882.7 445.7 L883.7 443.1 L884.7 440.5 L885.7 437.8 L886.7 435.2 L887.7 432.6 L888.7 429.9 L889.7 427.3 L890.7 424.6 L891.7 422.0 L892.7 419.3 L893.7 416.7 L894.7 414.0 L895.7 411.4 L896.7 408.7 L897.7 406.1 L898.7 403.4 L899.7 400.8 L900.7 398.2 L901.7 395.5 L902.7 392.9 L903.7 390.3 L904.7 387.6 L905.7 385.0 L906.7 382.4 L907.7 379.7 L908.7 377.1 L909.7 374.5 L910.7 371.8 L911.7 369.2 L912.7 366.6 L913.7 363.9 L914.7 361.3 L915.7 358.7 L916.7 356.0 L917.7 353.4 L918.7 350.8 L919.7 348.1 L920.7 345.5 L921.7 342.9 L922.7 340.2 L923.7 337.6 L924.7 335.0 L925.7 332.3 L926.7 329.7 L927.7 327.1 L928.7 324.5 L929.7 321.8 L930.7 319.2 L931.7 316.6 L932.7 313.9 L933.7 311.3 L934.7 308.7 L935.7 306.0 L936.7 303.4 L937.7 300.8 L938.7 298.2 L939.7 295.5 L940.7 292.9 L941.7 290.3 L942.7 287.6 L943.7 285.0 L944.7 282.4 L945.7 279.8 L946.7 277.1 L947.7 274.5 L948.7 271.9 L949.7 269.3 L950.7 266.6 L951.7 264.0 L952.7 261.4 L953.7 258.8 L954.7 256.1 L955.7 253.5 L956.7 250.9 L957.7 248.3 L958.7 245.6 L959.7 243.0 L960.7 240.4 L961.7 237.8 L962.7 235.2 L963.7 232.5 L964.7 229.9 L965.7 227.3 L966.7 224.7 L967.7 222.0 L968.7 219.4 L969.7 216.8 L970.7 214.2 L971.7 211.6 L972.7 208.9 L973.7 206.3 L974.7 203.7 L975.7 201.1 L976.7 198.5 L977.7 195.9 L978.7 193.2 L979.7 190.6 L980.7 188.0 L981.7 185.4 L982.7 182.8 L983.7 180.1 L984.7 177.5 L985.7 174.9 L986.7 172.3 L987.7 169.7 L988.7 167.1 L989.7 164.5 L990.7 161.8 L991.7 159.2 L992.7 156.6 L993.7 154.0" stroke="#e2452f" stroke-width="0.95" fill="none" stroke-linejoin="round"/>
<path d="M575.6 153.4 V644.2 H994.2" stroke="#111" stroke-width="1.1" fill="none"/>
<path d="M573.2 580.6 H578.0 M573.2 517.0 H578.0 M573.2 453.5 H578.0 M573.2 389.9 H578.0 M573.2 326.4 H578.0 M573.2 262.9 H578.0 M573.2 199.3 H578.0 M647.2 642.1 V646.5 M718.8 642.1 V646.5 M790.3 642.1 V646.5 M861.9 642.1 V646.5 M933.5 642.1 V646.5" stroke="#222" stroke-width="0.9" fill="none"/>
<path d="M785.5 153.9 V644.1" stroke="#0a0a0a" stroke-width="1.15" fill="none"/>
<text x="571.4" y="645.0" font-size="7.3" text-anchor="end" fill="#222">0</text>
<text x="571.4" y="581.5" font-size="7.3" text-anchor="end" fill="#222">5</text>
<text x="571.4" y="517.9" font-size="7.3" text-anchor="end" fill="#222">10</text>
<text x="571.4" y="454.4" font-size="7.3" text-anchor="end" fill="#222">15</text>
<text x="571.4" y="390.8" font-size="7.3" text-anchor="end" fill="#222">20</text>
<text x="571.4" y="327.3" font-size="7.3" text-anchor="end" fill="#222">25</text>
<text x="571.4" y="263.8" font-size="7.3" text-anchor="end" fill="#222">30</text>
<text x="571.4" y="200.2" font-size="7.3" text-anchor="end" fill="#222">35</text>
<text x="646.8" y="658.6" font-size="7.3" text-anchor="middle" fill="#222">2.5</text>
<text x="718.4" y="658.6" font-size="7.3" text-anchor="middle" fill="#222">5</text>
<text x="789.9" y="658.6" font-size="7.3" text-anchor="middle" fill="#222">7.5</text>
<text x="861.5" y="658.6" font-size="7.3" text-anchor="middle" fill="#222">10</text>
<text x="933.1" y="658.6" font-size="7.3" text-anchor="middle" fill="#222">12.5</text>
<text x="793.6" y="651.6" font-size="7.4" font-weight="700" text-anchor="middle" fill="#111">7.32</text>
<text x="784.8" y="670.4" font-size="7.5" font-weight="700" text-anchor="middle" fill="#111">Time (s)</text>
<text x="779.4" y="144" font-size="11" font-weight="700" text-anchor="middle" fill="#0c0c0c">Speed/X (km/h)</text>
<text x="558.4" y="370.2" font-size="7.2" font-weight="700" text-anchor="middle" fill="#d8311f">21.8656</text>
<text transform="translate(533.8 154.8) rotate(90)" font-size="7.4" font-weight="700" fill="#d8311f">Speed/X (km/h)</text>
</svg>
<!-- Markers panel -->
<div class="a" style="left:1038.4px;top:116.4px;width:250.6px;height:567.4px;background:#2e2e2e;"></div>
<div class="a" style="left:1042.4px;top:135.4px;width:242px;height:17.4px;background:#1b1b1b;"></div>
<!-- pin / close -->
<div class="a" style="left:1259px;top:120px;width:14px;height:7.2px;background:#8e8e8e;"></div>
<div class="a" style="left:1274.2px;top:120px;width:13.8px;height:7.2px;background:#8e8e8e;"></div>
<svg style="left:1259px;top:120px;" width="29" height="7.2" viewBox="0 0 29 7.2"><path d="M5.4 1 h3.6 v3 h-3.6 z M4.4 4.2 h5.4 M7.2 4.2 v2.4" stroke="#5a5a5a" stroke-width="0.8" fill="none"/><path d="M19.6 1.2 L24 6 M24 1.2 L19.6 6" stroke="#3c3c3c" stroke-width="0.9"/></svg>
<!-- buttons -->
<div class="a" style="left:1184.6px;top:136px;width:37.6px;height:15.6px;box-sizing:border-box;border:1px solid #4d4d4d;border-radius:1.5px;background:#030303;"></div>
<div class="a" style="left:1226.4px;top:136px;width:57.8px;height:15.6px;box-sizing:border-box;border:1px solid #4d4d4d;border-radius:1.5px;background:#030303;"></div>
<svg style="left:1187.6px;top:138.8px;" width="9.4" height="9.6" viewBox="0 0 9.4 9.6"><rect x="0.2" y="0.2" width="9" height="9.2" fill="#2a8fc4"/><rect x="1.8" y="0.2" width="5.8" height="4.6" fill="#e9f3f2"/><rect x="2" y="6.6" width="5.4" height="2.8" fill="#aeb6ba"/></svg>
<svg style="left:1228.6px;top:138.2px;" width="11" height="11" viewBox="0 0 11 11"><circle cx="5.5" cy="5.5" r="3.4" fill="#0a0a0a" stroke="#cfcfcf" stroke-width="0.9"/><path d="M0.6 3 V0.6 H3 M8 0.6 H10.4 V3 M10.4 8 V10.4 H8 M3 10.4 H0.6 V8" stroke="#e3a52c" stroke-width="1.3" fill="none"/><path d="M1 1 L2.6 2.6 M10 1 L8.4 2.6 M10 10 L8.4 8.4 M1 10 L2.6 8.4" stroke="#e3a52c" stroke-width="1"/></svg>
<!-- table -->
<div class="a" style="left:1042.6px;top:156px;width:242px;height:524px;box-sizing:border-box;border:1px solid #737373;background:#1e1e1e;"></div>
<div class="a" style="left:1043.6px;top:157px;width:240px;height:15px;background:#323232;"></div>
<div class="a" style="left:1043.6px;top:171.4px;width:240px;height:1px;background:#555;"></div>
<div class="a" style="left:1085px;top:157px;width:16.4px;height:14.6px;background:#2a3848;"></div>
<div class="a" style="left:1165px;top:157px;width:17.2px;height:14.6px;background:#2a3848;"></div>
<div class="a" style="left:1226px;top:157px;width:17.8px;height:14.6px;background:#2a3848;"></div>
<div class="a" style="left:1103.8px;top:157px;width:1px;height:15px;background:#7a7a7a;"></div>
<div class="a" style="left:1183.8px;top:157px;width:1px;height:15px;background:#7a7a7a;"></div>
<div class="a" style="left:1245.2px;top:157px;width:1px;height:15px;background:#7a7a7a;"></div>
<svg style="left:1085px;top:157px;" width="160" height="15" viewBox="0 0 160 15"><path d="M3.6 5 h9.4 l-4.7 5.4 z M83.8 5 h9.4 l-4.7 5.4 z M145 5 h9.4 l-4.7 5.4 z" fill="#050505"/></svg>
<!-- scrollbar -->
<div class="a" style="left:1043.6px;top:671.4px;width:240px;height:7.8px;background:#020202;"></div>
<div class="a" style="left:1052.4px;top:671.8px;width:132.4px;height:5.8px;background:linear-gradient(90deg,#3c3c3a 0,#6b6862 30%,#8b877e 52%,#6e6a64 75%,#4b4946 100%);"></div>
<div class="a" style="left:1043.6px;top:671.6px;width:6.2px;height:7.2px;background:#e8e8e8;"></div>
<div class="a" style="left:1277px;top:671.6px;width:6.4px;height:7.2px;background:#e8e8e8;"></div>
<svg style="left:1043.6px;top:671.6px;" width="240" height="7.2" viewBox="0 0 240 7.2"><path d="M4.6 1 L1.6 3.6 L4.6 6.2 M235.2 1 L238.2 3.6 L235.2 6.2" stroke="#111" stroke-width="1.1" fill="none"/></svg>
<span class="t" style="left:24.2px;top:4.8px;font-size:8.1px;font-weight:400;color:#1a1a1a;letter-spacing:-0.194px">SCANeR Analysing Tool</span>
<span class="t" style="left:14.4px;top:19.2px;font-size:8.4px;font-weight:400;color:#e4e4e4;letter-spacing:-0.029px">FILE</span>
<span class="t" style="left:43.0px;top:19.2px;font-size:8.4px;font-weight:400;color:#e4e4e4;letter-spacing:0.365px">VIEW</span>
<span class="t" style="left:76.3px;top:19.2px;font-size:8.4px;font-weight:400;color:#e4e4e4;letter-spacing:-0.474px">GRAPH</span>
<span class="t" style="left:115.0px;top:19.2px;font-size:8.4px;font-weight:400;color:#e4e4e4;letter-spacing:-0.251px">SPEECH</span>
<span class="t" style="left:159.2px;top:19.2px;font-size:8.4px;font-weight:400;color:#e4e4e4;letter-spacing:-0.070px">CONFIGURATION</span>
<span class="t" style="left:239.2px;top:19.2px;font-size:8.4px;font-weight:400;color:#e4e4e4;letter-spacing:0.410px">WINDOW</span>
<span class="t" style="left:289.0px;top:19.2px;font-size:8.4px;font-weight:400;color:#e4e4e4;letter-spacing:-0.297px">HELP</span>
<span class="t" style="left:19.2px;top:69.7px;font-size:8px;font-weight:400;color:#d8d8d8;letter-spacing:0.555px">0:0:0.0</span>
<span class="t" style="left:368.6px;top:69.7px;font-size:8px;font-weight:400;color:#d8d8d8;letter-spacing:0.356px">Current:</span>
<span class="t" style="left:407.0px;top:69.7px;font-size:8px;font-weight:400;color:#d0d0d0;letter-spacing:0.416px">00:00:07.319</span>
<span class="t" style="left:635.4px;top:69.7px;font-size:8px;font-weight:400;color:#d8d8d8;letter-spacing:0.146px">Replay Period</span>
<span class="t" style="left:1226.8px;top:69.7px;font-size:8px;font-weight:400;color:#d8d8d8;letter-spacing:0.444px">00:00:14.603</span>
<span class="t" style="left:525.8px;top:98.9px;font-size:7.4px;font-weight:400;color:#6a6a6a;letter-spacing:-0.087px">00:00:06.026</span>
<span class="t" style="left:29.2px;top:122.0px;font-size:8px;font-weight:400;color:#1c1c1c;letter-spacing:0.311px">3D view [770x852]</span>
<span class="t" style="left:541.6px;top:122.0px;font-size:8px;font-weight:400;color:#1c1c1c;letter-spacing:0.463px">Speed/X (km/h)</span>
<span class="t" style="left:1044.6px;top:120.0px;font-size:9px;font-weight:700;color:#f0f0f0;letter-spacing:0.211px">Markers</span>
<span class="t" style="left:1200.6px;top:138.0px;font-size:8px;font-weight:400;color:#f0f0f0;letter-spacing:0.255px">Save</span>
<span class="t" style="left:1242.6px;top:138.0px;font-size:8px;font-weight:400;color:#f0f0f0;letter-spacing:0.116px">Expand all</span>
<span class="t" style="left:1056.2px;top:159.0px;font-size:8px;font-weight:400;color:#dcdcdc;letter-spacing:0.439px">Time</span>
<span class="t" style="left:1119.2px;top:159.0px;font-size:8px;font-weight:400;color:#dcdcdc;letter-spacing:0.162px">Producer</span>
<span class="t" style="left:1198.0px;top:159.0px;font-size:8px;font-weight:400;color:#dcdcdc;letter-spacing:0.085px">Type</span><!-- AVS watermark -->
<div class="a" style="left:1237px;top:671px;width:40px;height:28px;background:rgba(255,255,255,0.72);"></div>
<svg style="left:1237px;top:671px;will-change:transform;" width="40" height="28" viewBox="0 0 40 28" font-family="Liberation Sans, sans-serif"><g fill="#272d7d"><path d="M3.4 25 L8.2 13.1 L11.4 13.1 L15.9 25 L12.5 25 L9.8 17.4 L6.9 25 Z"/><path d="M16.4 13.2 L20.1 13.2 L22.2 20.6 L24.3 13.2 L27.8 13.2 L23.9 25 L20.4 25 Z"/><text transform="translate(27.4 25.1) scale(0.8 1)" font-size="16.8" font-weight="700" stroke="#272d7d" stroke-width="0.9" stroke-linejoin="round">S</text></g></svg>

</body>
</html>
